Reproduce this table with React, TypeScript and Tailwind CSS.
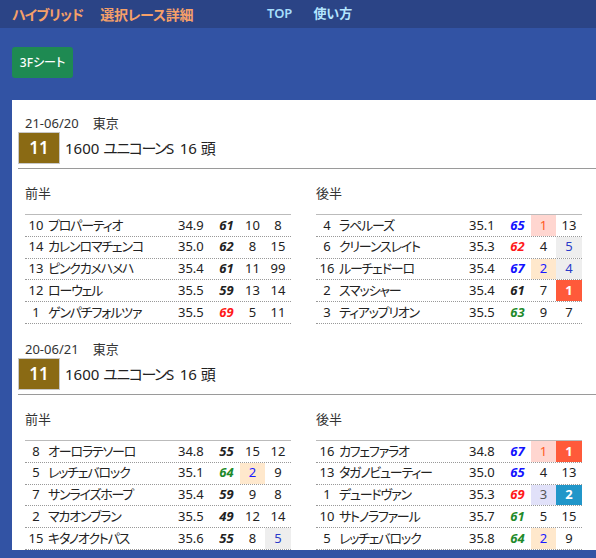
import React from "react";

type Cell = { v: string; s?: string };
type Row = { no: string; name: string; time: string; idx: string; ic: string; a: Cell; b: Cell };
type Race = { date: string; place: string; no: string; dist: string; name: string; heads: string; first: Row[]; second: Row[] };

// 指数の色
const K = "text-[#222]";
const BL = "text-[#1212ff]";
const RD = "text-[#ff1a1a]";
const GR = "text-[#1e8a2a]";

// 順位セル
const PINK = "bg-[#ffd6d0] text-[#ff5a1e]";
const BISQ = "bg-[#ffe8cc] text-[#1a1aff]";
const LAV = "bg-[#e1e1f9] text-[#555]";
const GRAY = "bg-[#eeeeee] text-[#2a3bc8]";
const TOM = "bg-[#ff5a3a] text-white font-bold";
const BLUE = "bg-[#2196c9] text-white font-bold";

const races: Race[] = [
   {
      date: "21-06/20",
      place: "東京",
      no: "11",
      dist: "1600",
      name: "ユニコーンS",
      heads: "16 頭",
      first: [
         { no: "10", name: "プロパーティオ", time: "34.9", idx: "61", ic: K, a: { v: "10" }, b: { v: "8" } },
         { no: "14", name: "カレンロマチェンコ", time: "35.0", idx: "62", ic: K, a: { v: "8" }, b: { v: "15" } },
         { no: "13", name: "ピンクカメハメハ", time: "35.4", idx: "61", ic: K, a: { v: "11" }, b: { v: "99" } },
         { no: "12", name: "ローウェル", time: "35.5", idx: "59", ic: K, a: { v: "13" }, b: { v: "14" } },
         { no: "1", name: "ゲンパチフォルツァ", time: "35.5", idx: "69", ic: RD, a: { v: "5" }, b: { v: "11" } },
      ],
      second: [
         { no: "4", name: "ラペルーズ", time: "35.1", idx: "65", ic: BL, a: { v: "1", s: PINK }, b: { v: "13" } },
         { no: "6", name: "クリーンスレイト", time: "35.3", idx: "62", ic: RD, a: { v: "4" }, b: { v: "5", s: GRAY } },
         { no: "16", name: "ルーチェドーロ", time: "35.4", idx: "67", ic: BL, a: { v: "2", s: BISQ }, b: { v: "4", s: GRAY } },
         { no: "2", name: "スマッシャー", time: "35.4", idx: "61", ic: K, a: { v: "7" }, b: { v: "1", s: TOM } },
         { no: "3", name: "ティアップリオン", time: "35.5", idx: "63", ic: GR, a: { v: "9" }, b: { v: "7" } },
      ],
   },
   {
      date: "20-06/21",
      place: "東京",
      no: "11",
      dist: "1600",
      name: "ユニコーンS",
      heads: "16 頭",
      first: [
         { no: "8", name: "オーロラテソーロ", time: "34.8", idx: "55", ic: K, a: { v: "15" }, b: { v: "12" } },
         { no: "5", name: "レッチェバロック", time: "35.1", idx: "64", ic: GR, a: { v: "2", s: BISQ }, b: { v: "9" } },
         { no: "7", name: "サンライズホープ", time: "35.4", idx: "59", ic: K, a: { v: "9" }, b: { v: "8" } },
         { no: "2", name: "マカオンブラン", time: "35.5", idx: "49", ic: K, a: { v: "12" }, b: { v: "14" } },
         { no: "15", name: "キタノオクトパス", time: "35.6", idx: "55", ic: K, a: { v: "8" }, b: { v: "5", s: GRAY } },
      ],
      second: [
         { no: "16", name: "カフェファラオ", time: "34.8", idx: "67", ic: BL, a: { v: "1", s: PINK }, b: { v: "1", s: TOM } },
         { no: "13", name: "タガノビューティー", time: "35.0", idx: "65", ic: BL, a: { v: "4" }, b: { v: "13" } },
         { no: "1", name: "デュードヴァン", time: "35.3", idx: "69", ic: RD, a: { v: "3", s: LAV }, b: { v: "2", s: BLUE } },
         { no: "10", name: "サトノラファール", time: "35.7", idx: "61", ic: GR, a: { v: "5" }, b: { v: "15" } },
         { no: "5", name: "レッチェバロック", time: "35.8", idx: "64", ic: GR, a: { v: "2", s: BISQ }, b: { v: "9" } },
      ],
   },
];

const HalfTable = ({ label, rows }: { label: string; rows: Row[] }) => (
   <div className="w-[291px]">
      <div className="mt-[14px] h-[20px] leading-[20px] text-[13px] text-[#333]">{label}</div>
      <div className="mt-[11px] w-[266px] border-t border-[#bbbbbb] text-[13px] text-[#222]">
         {rows.map((r, i) => (
            <div key={i} className="flex h-[21.8px] items-stretch border-b border-dotted border-[#999]">
               <div className="flex w-[22px] items-center justify-center">{r.no}</div>
               <div className="flex w-[126px] items-center overflow-hidden whitespace-nowrap pl-[1px] tracking-[-1.2px]">
                  {r.name}
               </div>
               <div className="flex w-[40px] items-center pl-[5px]">{r.time}</div>
               <div className={`flex w-[27px] items-center justify-center font-bold italic ${r.ic}`}>{r.idx}</div>
               <div className={`flex w-[25px] items-center justify-center ${r.a.s ?? ""}`}>{r.a.v}</div>
               <div className={`flex w-[26px] items-center justify-center ${r.b.s ?? ""}`}>{r.b.v}</div>
            </div>
         ))}
      </div>
   </div>
);

const RaceBlock = ({ race, first }: { race: Race; first: boolean }) => (
   <div className={first ? "pt-[15px]" : "pt-[17px]"}>
      <div className="h-[16px] pl-[7px] text-[13px] leading-[16px] text-[#333]">
         <span>{race.date}</span>
         <span className="ml-[14px]">{race.place}</span>
      </div>
      <div className="mt-[1px] flex items-center">
         <div className="flex h-[32px] w-[42px] items-center justify-center border border-[#c8c8c8] bg-[#8a6a14] text-[17px] font-semibold text-white">
            {race.no}
         </div>
         <div className="ml-[5px] whitespace-nowrap text-[15px] text-[#222]">
            <span>{race.dist}</span>
            <span className="ml-[4px] tracking-[-1.5px]">{race.name}</span>
            <span className="ml-[7px]">{race.heads}</span>
         </div>
      </div>
      <div className="mt-[4px] h-px bg-[#9a9a9a]" />
      <div className="flex pl-[7px]">
         <HalfTable label="前半" rows={race.first} />
         <HalfTable label="後半" rows={race.second} />
      </div>
   </div>
);

export default function App() {
   return (
      <div className="h-[558px] w-[596px] overflow-hidden bg-[#3253a4] font-['Noto_Sans','Noto_Sans_CJK_JP',sans-serif] [font-feature-settings:'palt']">
         <div className="flex h-[28px] items-center bg-[#2b4486] pl-3">
            <div className="w-[255px] whitespace-nowrap text-[14px] font-bold text-[#f6a069]">
               <span className="tracking-[-0.6px]">ハイブリッド</span>
               <span className="ml-[17px] tracking-[-0.3px]">選択レース詳細</span>
            </div>
            <a className="text-[13px] font-semibold text-[#a6defc]">TOP</a>
            <a className="ml-[21px] text-[13px] font-semibold text-[#b4e6ff]">使い方</a>
         </div>
         <div className="pl-3 pt-[19px]">
            <button className="h-[31px] w-[61px] rounded-[3px] bg-[#1e8a52] text-[12px] font-medium text-white">
               3Fシート
            </button>
         </div>
         <div className="ml-3 mt-[22px] w-[620px] bg-white pl-[6px]">
            {races.map((r, i) => (
               <RaceBlock key={i} race={r} first={i === 0} />
            ))}
         </div>
      </div>
   );
}
